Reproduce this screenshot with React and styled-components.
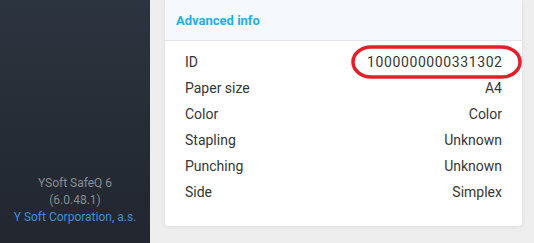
import React from "react";
import styled, { createGlobalStyle } from "styled-components";

const Global = createGlobalStyle`
  html, body { margin: 0; padding: 0; }
  body { font-family: Roboto, "Liberation Sans", sans-serif; background: #eeeeee; }
`;

const Page = styled.div`
  display: flex;
  height: 243px;
  width: 534px;
  overflow: hidden;
`;

const Sidebar = styled.aside`
  width: 150px;
  flex: none;
  background: linear-gradient(180deg, #2c343f 0%, #262c36 55%, #21262f 100%);
  display: flex;
  flex-direction: column;
  justify-content: flex-end;
  align-items: center;
  padding-bottom: 17px;
  box-sizing: border-box;
  font-size: 12px;
  line-height: 17px;
`;

const Version = styled.div`
  color: #878c93;
`;

const Company = styled.a`
  color: #3d8ddb;
  text-decoration: none;
`;

const Main = styled.main`
  flex: 1;
  background: #eeeeee;
  padding: 0 12px 0 15px;
`;

const Card = styled.section`
  background: #fff;
  border-radius: 0 0 3px 3px;
  box-shadow: 0 1px 4px rgba(0, 0, 0, 0.08);
  padding-bottom: 21px;
`;

const CardHeader = styled.header`
  height: 40px;
  background: #f5f8fc;
  border-bottom: 1px solid #e2e5e9;
  display: flex;
  align-items: center;
  padding-left: 11px;
  font-size: 13px;
  font-weight: 700;
  color: #1cb0ea;
`;

const Body = styled.div`
  padding: 8px 20px 0 20px;
`;

const Row = styled.div`
  position: relative;
  display: flex;
  justify-content: space-between;
  align-items: center;
  height: 26px;
  font-size: 14px;
  color: #363636;
`;

const Value = styled.span`
  letter-spacing: ${(p) => (p.$numeric ? "0.6px" : "0")};
  margin-right: ${(p) => (p.$numeric ? "-0.6px" : "0")};
`;

const Highlight = styled.svg`
  position: absolute;
  right: -20px;
  top: -4px;
  width: 171px;
  height: 34px;
  pointer-events: none;
`;

const rows = [
  ["ID", "1000000000331302"],
  ["Paper size", "A4"],
  ["Color", "Color"],
  ["Stapling", "Unknown"],
  ["Punching", "Unknown"],
  ["Side", "Simplex"],
];

export default function App() {
  return (
    <>
      <Global />
      <Page>
        <Sidebar>
          <Version>YSoft SafeQ 6</Version>
          <Version>(6.0.48.1)</Version>
          <Company href="#">Y Soft Corporation, a.s.</Company>
        </Sidebar>
        <Main>
          <Card>
            <CardHeader>Advanced info</CardHeader>
            <Body>
              {rows.map(([k, v], i) => (
                <Row key={k}>
                  <span>{k}</span>
                  <Value $numeric={i === 0}>{v}</Value>
                  {i === 0 && (
                    <Highlight viewBox="0 0 171 34">
                      <rect x="2" y="2" width="167" height="30" rx="18" ry="15" fill="none" stroke="#e61e28" strokeWidth="3.5" />
                    </Highlight>
                  )}
                </Row>
              ))}
            </Body>
          </Card>
        </Main>
      </Page>
    </>
  );
}
